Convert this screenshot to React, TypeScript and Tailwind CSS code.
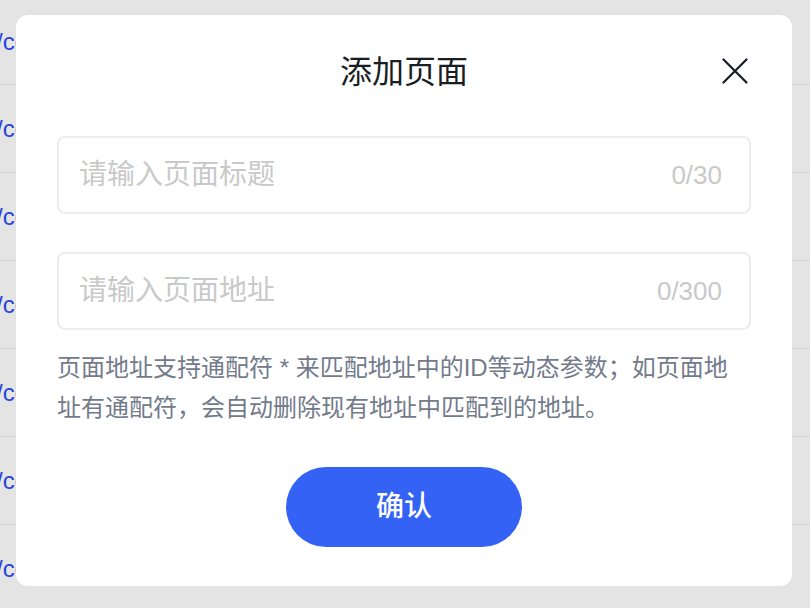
import React from "react";

const rows = [0, 1, 2, 3, 4, 5, 6];

export default function App() {
  const font = { fontFamily: '"Liberation Sans", "Noto Sans CJK SC", sans-serif' };
  return (
    <div className="relative w-[810px] h-[608px] overflow-hidden bg-[#e4e4e4]" style={font}>
      <div className="flex flex-col">
        {rows.map((r) => (
          <div
            key={r}
            className={`${r === 0 ? "h-[85px]" : "h-[88px]"} border-b border-[#d4d4d4] flex items-center`}
          >
            <span className="ml-[-4px] text-[24px] leading-none text-[#2743dd] whitespace-nowrap">/content</span>
          </div>
        ))}
      </div>

      <div className="absolute left-[16px] top-[15px] w-[776px] h-[571px] bg-white rounded-[12px] flex flex-col px-[41px] pt-[37px]">
        <div className="relative h-[40px] flex items-center justify-center">
          <span className="text-[32px] leading-[40px] text-[#1a1d24]">添加页面</span>
          <button className="absolute right-[3px] top-[6px] w-[26px] h-[26px] flex items-center justify-center">
            <svg width="26" height="26" viewBox="0 0 26 26" fill="none">
              <path d="M1.5 1.5 L24.5 24.5 M24.5 1.5 L1.5 24.5" stroke="#171b26" strokeWidth="2.2" strokeLinecap="round" />
            </svg>
          </button>
        </div>

        <div className="mt-[44px] h-[78px] border-2 border-[#ececec] rounded-[8px] flex items-center pl-[20px] pr-[27px]">
          <input
            className="flex-1 min-w-0 bg-transparent outline-none text-[28px] text-[#333] placeholder:text-[#c9c9c9]"
            placeholder="请输入页面标题"
            style={font}
          />
          <span className="text-[26px] text-[#c9c9c9]">0/30</span>
        </div>

        <div className="mt-[38px] h-[78px] border-2 border-[#ececec] rounded-[8px] flex items-center pl-[20px] pr-[27px]">
          <input
            className="flex-1 min-w-0 bg-transparent outline-none text-[28px] text-[#333] placeholder:text-[#c9c9c9]"
            placeholder="请输入页面地址"
            style={font}
          />
          <span className="text-[26px] text-[#c9c9c9]">0/300</span>
        </div>

        <p className="mt-[18px] text-[24px] leading-[40px] text-[#737b8b] pr-[14px]">
          页面地址支持通配符 * 来匹配地址中的ID等动态参数；如页面地址有通配符，会自动删除现有地址中匹配到的地址。
        </p>

        <div className="mt-[39px] flex justify-center">
          <button className="w-[236px] h-[80px] rounded-full bg-[#3462f5] text-white text-[28px] font-medium">
            确认
          </button>
        </div>
      </div>
    </div>
  );
}
